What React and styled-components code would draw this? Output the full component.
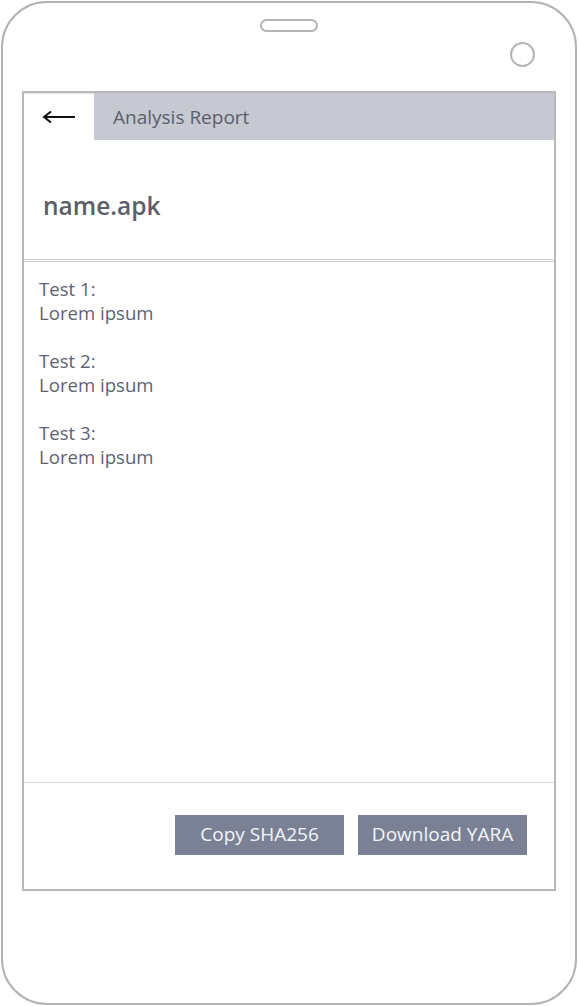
import styled, { createGlobalStyle } from "styled-components";

const Global = createGlobalStyle`
  body {
    margin: 0;
    background: #ffffff;
    font-family: "Open Sans", "Noto Sans", sans-serif;
  }
  * { box-sizing: border-box; }
`;

const Phone = styled.div`
  width: 576px;
  height: 1004px;
  margin: 1px 0 0 1px;
  border: 2px solid #b3b3b3;
  border-radius: 46px;
  padding: 0 19px;
  background: #fff;
`;

const TopArea = styled.div`
  height: 88px;
  display: flex;
  flex-direction: column;
  align-items: center;
  padding-top: 16px;
`;

const Speaker = styled.div`
  width: 58px;
  height: 13px;
  border: 2px solid #b3b3b3;
  border-radius: 7px;
`;

const Camera = styled.div`
  align-self: flex-end;
  margin: 10px 21px 0 0;
  width: 25px;
  height: 25px;
  border: 2px solid #b3b3b3;
  border-radius: 50%;
`;

const Screen = styled.div`
  height: 800px;
  border: 2px solid #b8b8b8;
  display: flex;
  flex-direction: column;
`;

const Header = styled.div`
  height: 47px;
  display: flex;
  background: #c6c9d2;
`;

const BackButton = styled.button`
  width: 70px;
  border: none;
  border-top: 1px solid #e4e4e4;
  background: #ffffff;
  display: flex;
  align-items: center;
  justify-content: center;
  padding: 0;
  cursor: pointer;
`;

const HeaderTitle = styled.div`
  display: flex;
  align-items: center;
  padding-left: 19px;
  font-size: 19px;
  color: #5a5f6c;
`;

const TitleBox = styled.div`
  height: 122px;
  border-bottom: 3px double #cfcfcf;
  display: flex;
  align-items: center;
  padding: 12px 0 0 19px;
  font-size: 24.5px;
  font-weight: 600;
  color: #5b6068;
`;

const Content = styled.div`
  flex: 1;
  padding: 15px 15px;
  border-bottom: 1px solid #d7dae1;
  display: flex;
  flex-direction: column;
  gap: 24px;
`;

const Item = styled.div`
  font-size: 18.6px;
  line-height: 24px;
  color: #5e6371;
`;

const Footer = styled.div`
  height: 106px;
  display: flex;
  justify-content: flex-end;
  align-items: flex-start;
  gap: 14px;
  padding: 32px 27px 0 0;
`;

const ActionButton = styled.button`
  width: 169px;
  height: 40px;
  border: none;
  background: #7b8195;
  color: #f4f5f7;
  font-family: inherit;
  font-size: 19px;
  padding: 0 0 2px;
  cursor: pointer;
`;

const tests = [
  { label: "Test 1:", value: "Lorem ipsum" },
  { label: "Test 2:", value: "Lorem ipsum" },
  { label: "Test 3:", value: "Lorem ipsum" },
];

export default function App() {
  return (
    <>
      <Global />
      <Phone>
        <TopArea>
          <Speaker />
          <Camera />
        </TopArea>
        <Screen>
          <Header>
            <BackButton aria-label="Back">
              <svg width="34" height="14" viewBox="0 0 34 14">
                <path d="M2 7 H33" stroke="#111" strokeWidth="2" fill="none" />
                <path d="M9 1.5 L2 7 L9 12.5" stroke="#111" strokeWidth="2" fill="none" />
              </svg>
            </BackButton>
            <HeaderTitle>Analysis Report</HeaderTitle>
          </Header>
          <TitleBox>name.apk</TitleBox>
          <Content>
            {tests.map((t) => (
              <Item key={t.label}>
                {t.label}
                <br />
                {t.value}
              </Item>
            ))}
          </Content>
          <Footer>
            <ActionButton>Copy SHA256</ActionButton>
            <ActionButton>Download YARA</ActionButton>
          </Footer>
        </Screen>
      </Phone>
    </>
  );
}
